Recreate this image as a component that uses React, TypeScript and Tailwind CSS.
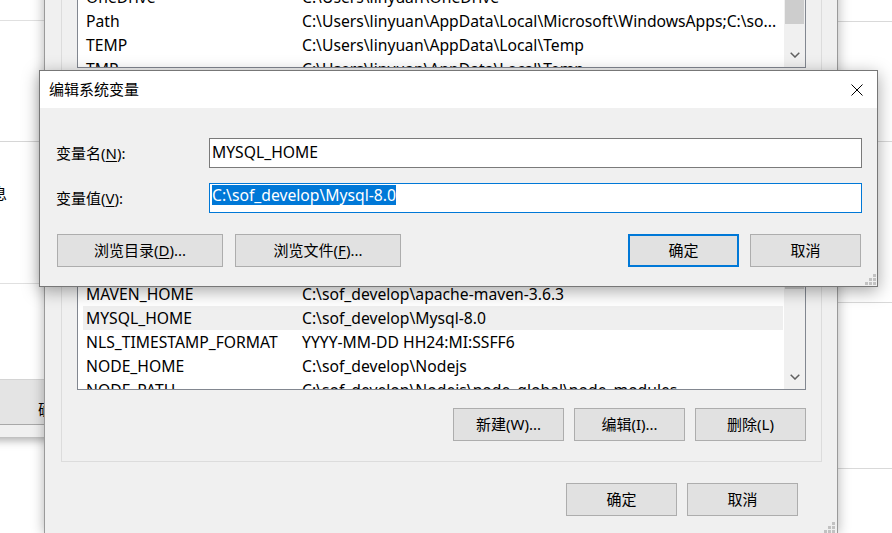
import React from "react";

const FONT = "font-['Noto_Sans','Noto_Sans_CJK_SC',sans-serif]";

function Chevron() {
  return (
    <svg width="10" height="6" viewBox="0 0 10 6">
      <path d="M0.7 0.7 L5 5 L9.3 0.7" fill="none" stroke="#606060" strokeWidth="1.5" />
    </svg>
  );
}

function Grip() {
  return (
    <svg width="12" height="12" viewBox="0 0 12 12" fill="#c2c2c2">
      <rect x="9" y="1" width="3" height="3" />
      <rect x="5" y="5" width="3" height="3" />
      <rect x="9" y="5" width="3" height="3" />
      <rect x="1" y="9" width="3" height="3" />
      <rect x="5" y="9" width="3" height="3" />
      <rect x="9" y="9" width="3" height="3" />
    </svg>
  );
}

type RowT = { n: string; v: string; hl?: boolean };

function Row({ n, v, hl }: RowT) {
  return (
    <div
      className={`flex h-[24px] shrink-0 items-center whitespace-nowrap pl-[3px] pt-[1px] text-[15.7px] ${
        hl ? "bg-[#efefef]" : ""
      }`}
    >
      <span className="w-[216px] shrink-0">{n}</span>
      <span>{v}</span>
    </div>
  );
}

function Btn({
  children,
  className = "w-[111px]",
  primary = false,
}: {
  children: React.ReactNode;
  className?: string;
  primary?: boolean;
}) {
  return (
    <div
      className={`flex h-[33px] shrink-0 items-center justify-center bg-[#e1e1e1] ${
        primary ? "border-2 border-[#0078d7]" : "border border-[#adadad]"
      } ${className}`}
    >
      {children}
    </div>
  );
}

const userRows: RowT[] = [
  { n: "OneDrive", v: "C:\\Users\\linyuan\\OneDrive" },
  { n: "Path", v: "C:\\Users\\linyuan\\AppData\\Local\\Microsoft\\WindowsApps;C:\\so..." },
  { n: "TEMP", v: "C:\\Users\\linyuan\\AppData\\Local\\Temp" },
  { n: "TMP", v: "C:\\Users\\linyuan\\AppData\\Local\\Temp" },
];

const sysRows: RowT[] = [
  { n: "CLASSPATH", v: ".;%JAVA_HOME%\\lib" },
  { n: "ComSpec", v: "C:\\Windows\\system32\\cmd.exe" },
  { n: "DriverData", v: "C:\\Windows\\System32\\Drivers\\DriverData" },
  { n: "JAVA_HOME", v: "C:\\sof_develop\\Java\\jdk1.8.0" },
  { n: "MAVEN_HOME", v: "C:\\sof_develop\\apache-maven-3.6.3" },
  { n: "MYSQL_HOME", v: "C:\\sof_develop\\Mysql-8.0", hl: true },
  { n: "NLS_TIMESTAMP_FORMAT", v: "YYYY-MM-DD HH24:MI:SSFF6" },
  { n: "NODE_HOME", v: "C:\\sof_develop\\Nodejs" },
  { n: "NODE_PATH", v: "C:\\sof_develop\\Nodejs\\node_global\\node_modules" },
];

export default function App() {
  return (
    <div className={`relative h-[533px] w-[892px] overflow-hidden bg-white text-[15px] text-black ${FONT}`}>
      {/* left background window */}
      <div className="absolute left-[-200px] top-0 flex h-[437px] w-[300px] flex-col bg-white shadow-[0_3px_9px_rgba(0,0,0,0.35)]">
        <div className="h-[21px] shrink-0 border-b border-[#e0e0e0]" />
        <div className="h-[121px] shrink-0 border-b border-[#d6d6d6]" />
        <div className="h-[142px] shrink-0 border-b border-[#e0e0e0] pl-[177px] pt-[41px] leading-[20px]">
          信息
        </div>
        <div className="h-[95px] shrink-0" />
        <div className="h-[46px] shrink-0 border-y border-t-[#d4d4d4] border-b-[#a8a8a8] bg-[#e4e4e4] pl-[238px] pt-[19px] leading-[20px]">
          确定
        </div>
        <div className="h-[12px] shrink-0 bg-[#f0f0f0]" />
      </div>

      {/* right background window */}
      <div className="absolute left-[800px] top-0 flex h-[533px] w-[92px] flex-col bg-white">
        <div className="h-[22px] shrink-0 border-b border-[#d9d9d9]" />
        <div className="h-[120px] shrink-0 border-b border-[#d9d9d9]" />
        <div className="h-[161px] shrink-0 border-b border-[#d9d9d9]" />
        <div className="h-[166px] shrink-0 border-b border-[#d9d9d9]" />
      </div>

      {/* environment variables window */}
      <div className="absolute left-[44px] top-[-60px] flex h-[594px] w-[794px] flex-col border-x border-[#9a9a9a] bg-[#f0f0f0] shadow-[0_0_12px_rgba(0,0,0,0.3)]">
        {/* user variables */}
        <div className="ml-[16px] mr-[15px] mt-[20px] flex shrink-0 flex-col border border-[#dcdcdc] px-[15px] pb-[20px]">
          <div className="mt-[23px] flex h-[84px] border border-[#828790] bg-white">
            <div className="flex flex-1 flex-col overflow-hidden pl-[5px] pr-[1px]">
              {userRows.map((r) => (
                <Row key={r.n} {...r} />
              ))}
            </div>
            <div className="flex w-[21px] flex-col bg-[#f0f0f0]">
              <div className="mx-[1px] h-[39px] bg-[#cdcdcd]" />
              <div className="flex-1" />
              <div className="flex h-[24px] items-center justify-center">
                <Chevron />
              </div>
            </div>
          </div>
          <div className="mt-[19px] flex justify-end gap-[10px]">
            <Btn>新建(N)...</Btn>
            <Btn>编辑(E)...</Btn>
            <Btn>删除(D)</Btn>
          </div>
        </div>

        {/* system variables */}
        <div className="ml-[16px] mr-[15px] mt-[12px] flex shrink-0 flex-col border border-[#dcdcdc] px-[15px] pb-[20px]">
          <div className="mt-[31px] flex h-[205px] border border-[#828790] bg-white">
            <div className="flex flex-1 flex-col overflow-hidden pl-[5px] pr-[1px]">
              {sysRows.map((r) => (
                <Row key={r.n} {...r} />
              ))}
            </div>
            <div className="flex w-[21px] flex-col bg-[#f0f0f0]">
              <div className="h-[40px]" />
              <div className="mx-[1px] h-[63px] bg-[#cdcdcd]" />
              <div className="flex-1" />
              <div className="flex h-[24px] items-center justify-center">
                <Chevron />
              </div>
            </div>
          </div>
          <div className="mt-[18px] flex justify-end gap-[10px]">
            <Btn>新建(W)...</Btn>
            <Btn>编辑(I)...</Btn>
            <Btn>删除(L)</Btn>
          </div>
        </div>

        <div className="mr-[39px] mt-[21px] flex justify-end gap-[10px]">
          <Btn>确定</Btn>
          <Btn>取消</Btn>
        </div>

        <div className="absolute bottom-[1px] right-[2px]">
          <Grip />
        </div>
      </div>

      {/* edit dialog */}
      <div className="absolute left-[39px] top-[70px] flex h-[217px] w-[839px] flex-col border border-[#777777] bg-[#f0f0f0] shadow-[0_4px_16px_rgba(0,0,0,0.35)]">
        <div className="flex h-[37px] shrink-0 items-center justify-between bg-white pl-[9px] pr-[14px]">
          <span>编辑系统变量</span>
          <svg width="12" height="12" viewBox="0 0 12 12">
            <path d="M0.5 0.5 L11.5 11.5 M11.5 0.5 L0.5 11.5" stroke="#000" strokeWidth="1" fill="none" />
          </svg>
        </div>
        <div className="relative flex flex-1 flex-col pl-[16px] pr-[15px]">
          <div className="mt-[30px] flex h-[30px] items-center">
            <span className="w-[153px] shrink-0">
              变量名(<span className="underline underline-offset-2">N</span>):
            </span>
            <div className="flex h-full flex-1 items-start border border-[#7a7a7a] bg-white pl-[2px] pt-[3px] text-[15.7px] leading-[20px]">
              MYSQL_HOME
            </div>
          </div>
          <div className="mt-[15px] flex h-[30px] items-center">
            <span className="w-[153px] shrink-0">
              变量值(<span className="underline underline-offset-2">V</span>):
            </span>
            <div className="flex h-full flex-1 items-start border border-[#0078d7] bg-white pl-[2px] pt-[1px] text-[15.7px]">
              <span className="bg-[#0078d7] leading-[20px] text-white">C:\sof_develop\Mysql-8.0</span>
            </div>
          </div>
          <div className="mt-[21px] flex justify-between px-[1px]">
            <div className="flex gap-[12px]">
              <Btn className="w-[166px]">
                浏览目录(<span className="underline underline-offset-2">D</span>)...
              </Btn>
              <Btn className="w-[166px]">
                浏览文件(<span className="underline underline-offset-2">F</span>)...
              </Btn>
            </div>
            <div className="flex gap-[11px]">
              <Btn primary>确定</Btn>
              <Btn>取消</Btn>
            </div>
          </div>
          <div className="absolute bottom-[1px] right-[1px]">
            <Grip />
          </div>
        </div>
      </div>
    </div>
  );
}
